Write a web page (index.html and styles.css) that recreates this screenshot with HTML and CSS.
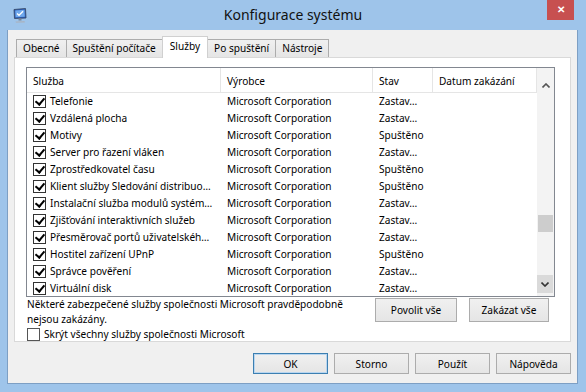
FILE: index.html
```html
<!DOCTYPE html>
<html lang="cs">
<head>
    <meta charset="UTF-8">
    <title>Konfigurace systému</title>
    <link rel="stylesheet" href="styles.css">
</head>
<body>
    <div class="okno">
        <div class="titulek">
            <svg class="ikona" width="16" height="16" viewBox="0 0 16 16">
                <path d="M2 2.5 L13.5 1.5 L14 11 L2.5 11.5 Z" fill="#2a5db8" stroke="#34435e" stroke-width="0.8"/>
                <path d="M3.2 3.5 L12.5 2.7 L12.8 9.8 L3.6 10.3 Z" fill="#6fa8ec"/>
                <path d="M5 6.5 L7 8.3 L11 4.3" stroke="#fff" stroke-width="1.3" fill="none"/>
                <rect x="6.5" y="11.5" width="3" height="2" fill="#7b8798"/>
                <path d="M3.5 14.5 L12.5 14 L13 15.5 L4 15.8 Z" fill="#a9b4c3"/>
            </svg>
            <span class="nazev">Konfigurace systému</span>
            <div class="zavrit">&#x2715;</div>
        </div>

        <div class="klient">
            <div class="zalozky">
                <div class="zalozka">Obecné</div>
                <div class="zalozka">Spuštění počítače</div>
                <div class="zalozka vybrana">Služby</div>
                <div class="zalozka">Po spuštění</div>
                <div class="zalozka">Nástroje</div>
            </div>

            <div class="panel">
                <div class="seznam">
                    <div class="obsah">
                        <div class="hlavicka">
                            <div class="sloupec">Služba</div>
                            <div class="sloupec">Výrobce</div>
                            <div class="sloupec">Stav</div>
                            <div class="sloupec">Datum zakázání</div>
                        </div>
                        <div id="radky"></div>
                    </div>
                    <div class="posuvnik">
                        <div class="sipka nahoru">
                            <svg width="8" height="5" viewBox="0 0 8 5"><path d="M0.5 4.5 L4 1 L7.5 4.5" stroke="#555" stroke-width="1.6" fill="none"/></svg>
                        </div>
                        <div class="jezdec"></div>
                        <div class="mezera"></div>
                        <div class="sipka dolu">
                            <svg width="8" height="5" viewBox="0 0 8 5"><path d="M0.5 0.5 L4 4 L7.5 0.5" stroke="#333" stroke-width="1.6" fill="none"/></svg>
                        </div>
                    </div>
                </div>

                <div class="spodek">
                    <div class="poznamka">
                        <p>Některé zabezpečené služby společnosti Microsoft pravděpodobně<br>nejsou zakázány.</p>
                        <label class="skryt"><span class="check"></span>Skrýt všechny služby společnosti Microsoft</label>
                    </div>
                    <div class="tlacitka">
                        <button class="btn vse-povolit">Povolit vše</button>
                        <button class="btn vse-zakazat">Zakázat vše</button>
                    </div>
                </div>
            </div>

            <div class="dolni-tlacitka">
                <button class="btn dolni vychozi">OK</button>
                <button class="btn dolni">Storno</button>
                <button class="btn dolni">Použít</button>
                <button class="btn dolni">Nápověda</button>
            </div>
        </div>
    </div>

    <script>
        let sluzby = [
            ["Telefonie", "Zastav…"],
            ["Vzdálená plocha", "Zastav…"],
            ["Motivy", "Spuštěno"],
            ["Server pro řazení vláken", "Zastav…"],
            ["Zprostředkovatel času", "Spuštěno"],
            ["Klient služby Sledování distribuo…", "Spuštěno"],
            ["Instalační služba modulů systém…", "Zastav…"],
            ["Zjišťování interaktivních služeb", "Zastav…"],
            ["Přesměrovač portů uživatelskéh…", "Zastav…"],
            ["Hostitel zařízení UPnP", "Spuštěno"],
            ["Správce pověření", "Zastav…"],
            ["Virtuální disk", "Zastav…"]
        ];

        let radky = document.getElementById("radky");
        sluzby.forEach(s => {
            let radek = document.createElement("div");
            radek.className = "radek";
            radek.innerHTML =
                `<div class="bunka prvni"><span class="check on"></span>${s[0]}</div>` +
                `<div class="bunka">Microsoft Corporation</div>` +
                `<div class="bunka">${s[1]}</div>` +
                `<div class="bunka"></div>`;
            radky.appendChild(radek);
        });
    </script>
</body>
</html>
```

FILE: styles.css
```css
* {
    box-sizing: border-box;
}
body {
    margin: 0;
    width: 586px;
    height: 392px;
    overflow: hidden;
    background: #9ec4ea;
    font-family: "Noto Sans", sans-serif;
    font-size: 10.1px;
    color: #000;
}
.okno {
    width: 586px;
    height: 392px;
    background: #9ec4ea;
}
.titulek {
    position: relative;
    height: 30px;
    line-height: 30px;
    text-align: center;
    font-size: 14px;
    color: #111;
}
.ikona {
    position: absolute;
    left: 12px;
    top: 7px;
}
.zavrit {
    position: absolute;
    left: 547px;
    top: 0;
    width: 27px;
    height: 20px;
    line-height: 19px;
    background: #c75050;
    color: #fff;
    font-size: 10px;
    font-weight: bold;
}
.klient {
    margin-left: 7px;
    width: 571px;
    height: 354px;
    background: #f0f0f0;
    border: 1px solid #7d9fc4;
    border-top: none;
    padding: 7px 6px 0 6px;
}
.zalozky {
    display: flex;
    align-items: flex-end;
    height: 20px;
    padding-left: 2px;
}
.zalozka {
    height: 18px;
    line-height: 17px;
    padding: 0 6px;
    margin-left: -1px;
    border: 1px solid #acacac;
    border-bottom: none;
    background: linear-gradient(#f0f0f0, #e5e5e5);
    white-space: nowrap;
}
.zalozka:first-child {
    margin-left: 0;
}
.zalozka.vybrana {
    position: relative;
    z-index: 1;
    height: 22px;
    line-height: 19px;
    margin-bottom: -1px;
    background: #fff;
    border-color: #d0d0d0;
    padding: 0 7px;
}
.panel {
    height: 285px;
    background: #fff;
    border: 1px solid #d9d9d9;
    padding: 9px 15px 0 11px;
}
.seznam {
    display: flex;
    height: 230px;
    border: 1px solid #828790;
    overflow: hidden;
}
.obsah {
    flex: 1;
    overflow: hidden;
}
.hlavicka, .radek {
    display: grid;
    grid-template-columns: 194px 152px 60px 104px;
}
.hlavicka {
    height: 25px;
    border-bottom: 1px solid #e5e5e5;
}
.sloupec {
    padding: 3px 0 0 6px;
    line-height: 21px;
    border-right: 1px solid #e5e5e5;
    white-space: nowrap;
}
.radek {
    height: 17px;
    line-height: 17px;
}
.bunka {
    padding-left: 6px;
    white-space: nowrap;
    overflow: hidden;
}
.bunka.prvni {
    display: flex;
    align-items: center;
    padding-left: 6px;
}
.check {
    position: relative;
    display: inline-block;
    width: 13px;
    height: 13px;
    border: 1px solid #333;
    background: #fff;
    margin-right: 4px;
    flex-shrink: 0;
}
.check.on::after {
    content: "";
    position: absolute;
    left: 3px;
    top: 0px;
    width: 4px;
    height: 7px;
    border-right: 2px solid #000;
    border-bottom: 2px solid #000;
    transform: rotate(40deg);
}
.posuvnik {
    width: 17px;
    background: #f3f3f3;
    display: flex;
    flex-direction: column;
}
.sipka {
    height: 17px;
    display: flex;
    align-items: center;
    justify-content: center;
}
.sipka.nahoru {
    margin-top: 9px;
}
.jezdec {
    margin: 121px 1px 0 1px;
    height: 17px;
    background: #cdcdcd;
}
.mezera {
    flex: 1;
}
.sipka.dolu {
    height: 18px;
    margin: 0 1px 3px 0;
    background: #dadada;
}
.spodek {
    display: flex;
    justify-content: space-between;
}
.poznamka {
    padding-left: 1px;
    line-height: 15px;
}
.poznamka p {
    margin: 0;
}
.skryt {
    display: flex;
    align-items: center;
    height: 15px;
}
.skryt .check {
    border-color: #555;
    margin-right: 4px;
}
.tlacitka {
    display: flex;
    gap: 12px;
    margin: 1px 6px 0 0;
}
.btn {
    height: 24px;
    font-family: "Noto Sans", sans-serif;
    font-size: 10.1px;
    color: #000;
    background: linear-gradient(#f0f0f0, #e5e5e5);
    border: 1px solid #acacac;
    padding: 0;
}
.vse-povolit {
    width: 82px;
}
.vse-zakazat {
    width: 80px;
}
.dolni-tlacitka {
    display: flex;
    justify-content: flex-end;
    gap: 6px;
    margin-top: 11px;
}
.btn.dolni {
    width: 75px;
    height: 21px;
}
.btn.vychozi {
    border-color: #3c7fb1;
    box-shadow: inset 0 0 0 1px #b9d6f0;
}
```
